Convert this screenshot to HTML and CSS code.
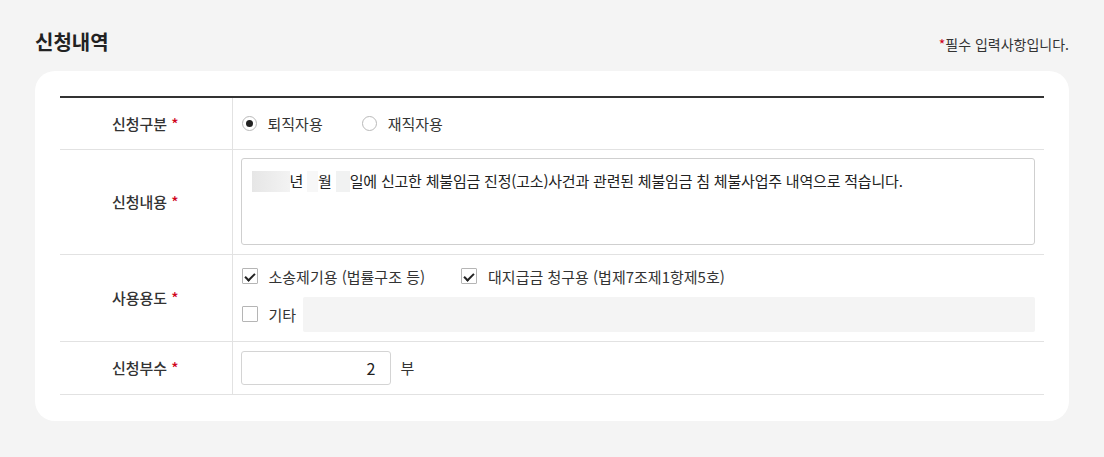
FILE: index.html
```html
<!DOCTYPE html>
<html lang="ko">
<head>
    <meta charset="UTF-8">
    <meta name="viewport" content="width=device-width, initial-scale=1.0">
    <title>신청내역</title>
    <link rel="stylesheet" href="styles.css">
</head>
<body>
    <div class="container">
        <!-- 제목 -->
        <div class="section-head">
            <h2>신청내역</h2>
            <p class="req-note"><span class="star">*</span>필수 입력사항입니다.</p>
        </div>

        <div class="card">
            <table class="form-table">
                <colgroup>
                    <col class="col-label">
                    <col>
                </colgroup>
                <tbody>
                    <tr class="row-type">
                        <th>신청구분 <span class="star">*</span></th>
                        <td>
                            <div class="radio-group">
                                <label class="radio"><span class="radio-mark checked"></span>퇴직자용</label>
                                <label class="radio"><span class="radio-mark"></span>재직자용</label>
                            </div>
                        </td>
                    </tr>
                    <tr class="row-content">
                        <th>신청내용 <span class="star">*</span></th>
                        <td>
                            <div class="textarea-box">
                                <span class="blur blur-year"></span>년 <span class="blur blur-sm"></span>월 <span class="blur blur-md"></span>일에 신고한 체불임금 진정(고소)사건과 관련된 체불임금 침 체불사업주 내역으로 적습니다.
                            </div>
                        </td>
                    </tr>
                    <tr class="row-use">
                        <th>사용용도 <span class="star">*</span></th>
                        <td>
                            <div class="check-line">
                                <label class="check"><span class="check-mark checked"></span>소송제기용 (법률구조 등)</label>
                                <label class="check"><span class="check-mark checked"></span>대지급금 청구용 (법제7조제1항제5호)</label>
                            </div>
                            <div class="check-line etc-line">
                                <label class="check"><span class="check-mark"></span>기타</label>
                                <div class="etc-input"></div>
                            </div>
                        </td>
                    </tr>
                    <tr class="row-count">
                        <th>신청부수 <span class="star">*</span></th>
                        <td>
                            <div class="count-line">
                                <div class="num-input">2</div>
                                <span>부</span>
                            </div>
                        </td>
                    </tr>
                </tbody>
            </table>
        </div>
    </div>
</body>
</html>
```

FILE: styles.css
```css
* {
    box-sizing: border-box;
    margin: 0;
    padding: 0;
}

body {
    font-family: "Noto Sans CJK KR", "Noto Sans", sans-serif;
    background-color: #f4f4f4;
    color: #333;
    font-size: 15px;
    line-height: 21px;
}

.container {
    padding: 28px 35px 36px;
}

.section-head {
    display: flex;
    justify-content: space-between;
    align-items: flex-end;
    margin-bottom: 15px;
}

.section-head h2 {
    font-size: 20px;
    font-weight: 700;
    line-height: 28px;
    color: #222;
}

.req-note {
    font-size: 14px;
    color: #333;
    line-height: 20px;
    margin-bottom: 2px;
}

.star {
    color: #d0021b;
}

.card {
    background: #fff;
    border-radius: 20px;
    padding: 25px 25px 26px;
}

.form-table {
    width: 100%;
    border-collapse: collapse;
    border-top: 2px solid #333;
}

.col-label {
    width: 172px;
}

.form-table th,
.form-table td {
    border-bottom: 1px solid #e2e2e2;
    padding: 9px 9px 9px 8px;
    vertical-align: middle;
}

.form-table th {
    font-weight: 500;
    color: #333;
    text-align: center;
    border-right: 1px solid #e2e2e2;
}

.row-type td {
    height: 52px;
    padding-left: 9px;
}

.row-content td {
    height: 105px;
    padding-top: 8px;
    padding-bottom: 9px;
}

.row-use td {
    height: 87px;
    padding-left: 9px;
}

.row-count td {
    height: 53px;
}

/* 라디오 */
.radio-group {
    display: flex;
    gap: 39px;
}

.radio,
.check {
    display: flex;
    align-items: center;
    gap: 11px;
}

.radio-mark {
    width: 15px;
    height: 15px;
    border: 1px solid #b9b9b9;
    border-radius: 50%;
    display: flex;
    align-items: center;
    justify-content: center;
}

.radio-mark.checked::after {
    content: "";
    width: 7px;
    height: 7px;
    border-radius: 50%;
    background: #222;
}

/* 신청내용 */
.textarea-box {
    height: 87px;
    border: 1px solid #cfcfcf;
    border-radius: 3px;
    padding: 11px 10px;
    color: #222;
    letter-spacing: -0.2px;
}

.blur {
    display: inline-block;
    height: 21px;
    vertical-align: -5px;
    background: linear-gradient(90deg, #e6e6e6, #f3f3f3);
}

.blur-year {
    width: 38px;
}

.blur-sm {
    width: 11px;
    background: #f7f7f7;
}

.blur-md {
    width: 14px;
    background: #f1f2f2;
}

/* 체크박스 */
.check-line {
    display: flex;
    align-items: center;
    gap: 36px;
    height: 25px;
}

.check-mark {
    width: 16px;
    height: 16px;
    border: 1px solid #b5b5b5;
    border-radius: 1px;
    position: relative;
}

.check-mark.checked::after {
    content: "";
    position: absolute;
    left: 4px;
    top: 2px;
    width: 4px;
    height: 8px;
    border: solid #222;
    border-width: 0 2px 2px 0;
    transform: rotate(45deg);
}

.etc-line {
    margin-top: 8px;
    height: 35px;
    gap: 7px;
}

.etc-input {
    flex: 1;
    height: 35px;
    background: #f4f4f4;
    border-radius: 2px;
}

/* 신청부수 */
.count-line {
    display: flex;
    align-items: center;
    gap: 10px;
}

.num-input {
    width: 150px;
    height: 34px;
    border: 1px solid #d4d4d4;
    border-radius: 3px;
    text-align: right;
    padding: 0 14px;
    line-height: 32px;
    font-size: 16px;
    color: #222;
}
```
